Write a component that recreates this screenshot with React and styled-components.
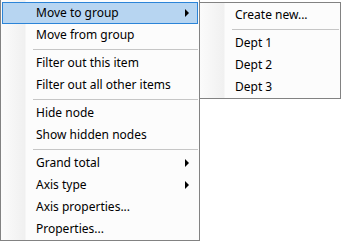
import React from 'react';
import styled, { createGlobalStyle } from 'styled-components';

const GlobalStyle = createGlobalStyle`
  html, body {
    margin: 0;
    padding: 0;
    background: #ffffff;
    overflow: hidden;
  }
`;

const Page = styled.div`
  display: flex;
  align-items: flex-start;
  width: 342px;
  height: 242px;
  font-family: "Segoe UI", "Noto Sans", "Liberation Sans", sans-serif;
  font-size: 12px;
  color: #000;
`;

const Menu = styled.div`
  position: relative;
  display: flex;
  flex-direction: column;
  box-sizing: border-box;
  width: ${p => p.$width}px;
  margin-top: ${p => p.$top}px;
  margin-left: ${p => p.$left || 0}px;
  padding: ${p => p.$padTop}px 0 0;
  border: 1px solid #828282;
  background: linear-gradient(to right, #fbfbfb 0, #f0f0f0 24px, #fcfcfc 25px, #fcfcfc 100%);
`;

const Item = styled.div`
  position: relative;
  display: flex;
  align-items: center;
  height: 22px;
  box-sizing: border-box;
  margin: 0 1px;
  padding-left: 33px;
  border: 1px solid ${p => (p.$active ? '#2b84d8' : 'transparent')};
  background: ${p => (p.$active ? '#b7d5f1' : 'transparent')};
  white-space: nowrap;
`;

const Label = styled.span`
  flex: 1;
  line-height: 20px;
`;

const Arrow = styled.span`
  width: 0;
  height: 0;
  margin-right: 8px;
  border-top: 4px solid transparent;
  border-bottom: 4px solid transparent;
  border-left: 4px solid #000;
`;

const Separator = styled.div`
  height: 6px;
  display: flex;
  align-items: center;
  padding-left: 32px;
  margin-right: 1px;

  &::after {
    content: '';
    flex: 1;
    height: 1px;
    background: #c6c6c6;
  }
`;

const mainItems = [
  { label: 'Move to group', sub: true, active: true },
  { label: 'Move from group' },
  '-',
  { label: 'Filter out this item' },
  { label: 'Filter out all other items' },
  '-',
  { label: 'Hide node' },
  { label: 'Show hidden nodes' },
  '-',
  { label: 'Grand total', sub: true },
  { label: 'Axis type', sub: true },
  { label: 'Axis properties...' },
  { label: 'Properties...' },
];

const subItems = [
  { label: 'Create new...' },
  '-',
  { label: 'Dept 1' },
  { label: 'Dept 2' },
  { label: 'Dept 3' },
];

const renderItems = items =>
  items.map((it, i) =>
    it === '-' ? (
      <Separator key={i} />
    ) : (
      <Item key={i} $active={it.active}>
        <Label>{it.label}</Label>
        {it.sub && <Arrow />}
      </Item>
    )
  );

export default function App() {
  return (
    <>
      <GlobalStyle />
      <Page>
        <Menu $width={200} $top={-1} $padTop={2}>
          {renderItems(mainItems)}
        </Menu>
        <Menu $width={142} $top={2} $left={-1} $padTop={1}>
          {renderItems(subItems)}
        </Menu>
      </Page>
    </>
  );
}
